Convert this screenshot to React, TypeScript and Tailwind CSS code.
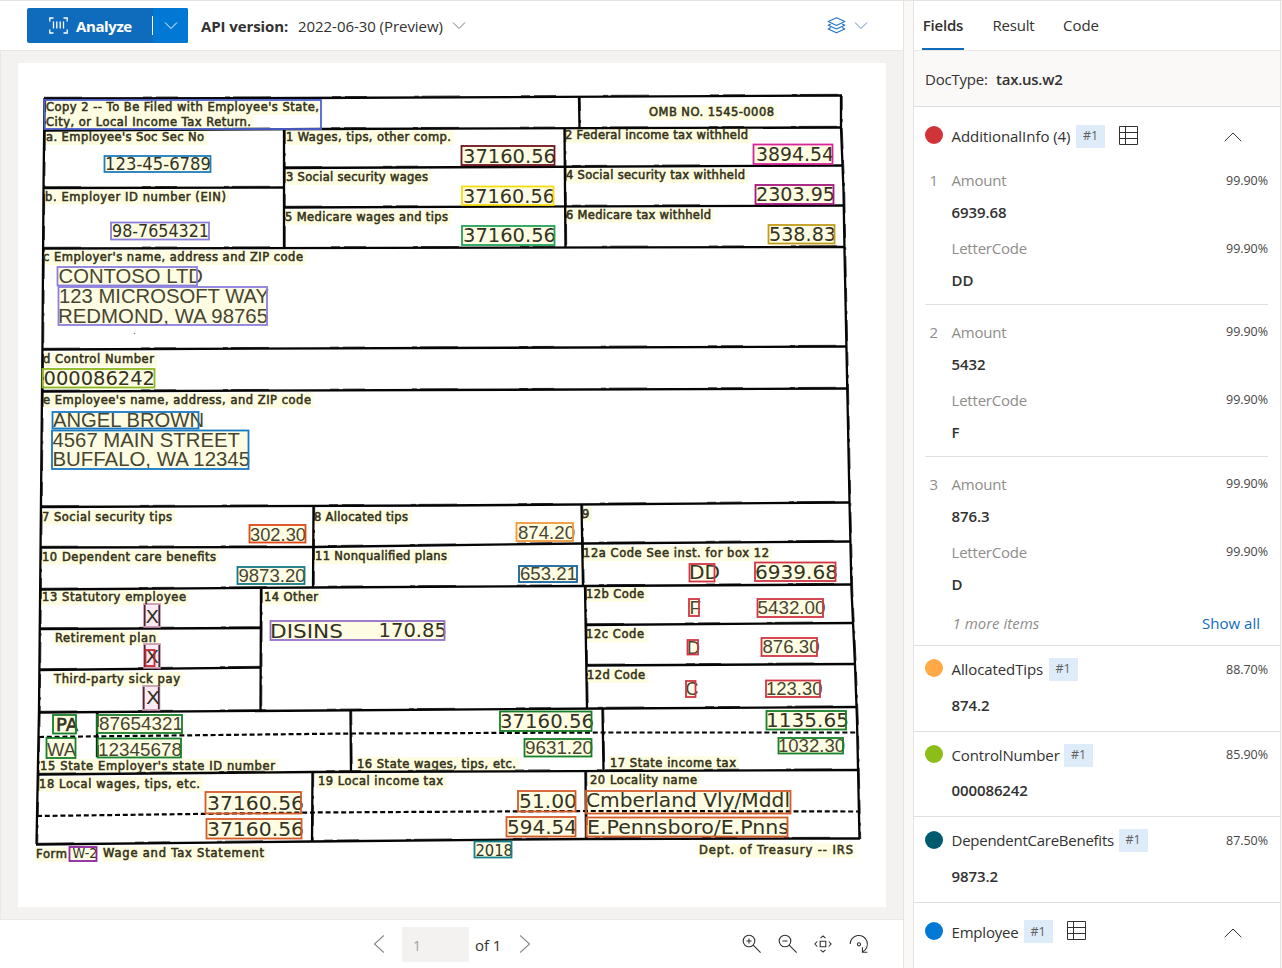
import React from "react";

type Label = [text: string, x1: number, x2: number, baseline: number];
type Field = [text: string, x1: number, x2: number, baseline: number, size: number, face: "v" | "a"];
type Box = [x1: number, y1: number, x2: number, y2: number, color: string];

const labels: Label[] = [
  ["Copy 2 -- To Be Filed with Employee's State,", 46, 319, 111.4],
  ["City, or Local Income Tax Return.", 46, 251, 126],
  ["a. Employee's Soc Sec No", 46, 204, 141.5],
  ["b. Employer ID number (EIN)", 45, 226, 201],
  ["1 Wages, tips, other comp.", 286, 451, 141.5],
  ["3 Social security wages", 286, 428, 181.5],
  ["5 Medicare wages and tips", 285, 448, 221],
  ["OMB NO. 1545-0008", 649, 774, 116.5],
  ["2 Federal income tax withheld", 565, 748, 139.6],
  ["4 Social security tax withheld", 566, 745, 179.6],
  ["6 Medicare tax withheld", 566, 711, 219.2],
  ["c Employer's name, address and ZIP code", 43, 303, 261.5],
  ["d Control Number", 43, 154, 363.5],
  ["e Employee's name, address, and ZIP code", 43, 311, 404.2],
  ["7 Social security tips", 42, 172, 521],
  ["8 Allocated tips", 314, 408, 521],
  ["9", 582, 589, 518],
  ["10 Dependent care benefits", 42, 216, 561],
  ["11 Nonqualified plans", 315, 447, 560.5],
  ["12a Code See inst. for box 12", 583, 769, 557.5],
  ["13 Statutory employee", 42, 186, 601.5],
  ["14 Other", 264, 318, 601],
  ["12b Code", 586, 644, 598.4],
  ["12c Code", 586, 644, 638.7],
  ["12d Code", 587, 645, 679.5],
  ["Retirement plan", 55, 156, 642],
  ["Third-party sick pay", 54, 180, 683],
  ["15 State Employer's state ID number", 40, 275, 770],
  ["16 State wages, tips, etc.", 357, 516, 768],
  ["17 State income tax", 610, 736, 767.3],
  ["18 Local wages, tips, etc.", 39, 200, 788],
  ["19 Local income tax", 318, 443, 785],
  ["20 Locality name", 590, 697, 784.4],
  ["Form", 36, 67, 858.3],
  ["Wage and Tax Statement", 103, 264, 857.5],
  ["Dept. of Treasury -- IRS", 699, 853, 854.4],
];

const fields: Field[] = [
  ["123-45-6789", 105, 211, 170.3, 18, "v"],
  ["98-7654321", 112, 209, 237.8, 18, "v"],
  ["37160.56", 463, 556, 163, 20, "v"],
  ["37160.56", 463, 555, 203, 20, "v"],
  ["37160.56", 463, 556, 242.8, 20, "v"],
  ["3894.54", 756, 834, 161.8, 20, "v"],
  ["2303.95", 756, 835, 201.8, 20, "v"],
  ["538.83", 769, 836, 241.8, 20, "v"],
  ["CONTOSO LTD", 58.5, 203, 283.5, 19.6, "a"],
  ["123 MICROSOFT WAY", 59, 269, 303.3, 19.6, "a"],
  ["REDMOND, WA 98765", 58, 268, 323.2, 19.6, "a"],
  ["000086242", 43.5, 155, 385.5, 20, "v"],
  ["ANGEL BROWN", 53, 204, 427.2, 19.6, "a"],
  ["4567 MAIN STREET", 52.5, 240, 447, 19.6, "a"],
  ["BUFFALO, WA 12345", 52.5, 250, 466.8, 19.6, "a"],
  ["302.30", 250, 306, 541, 19, "a"],
  ["9873.20", 238.5, 305.5, 582.5, 19, "a"],
  ["874.20", 518, 575, 539, 19, "a"],
  ["653.21", 520, 577, 580.3, 19, "a"],
  ["DD", 689, 720, 579.5, 19, "v"],
  ["6939.68", 755, 838, 579.2, 20, "v"],
  ["F", 689.5, 701, 614.8, 18, "a"],
  ["5432.00", 757.5, 825.5, 614.8, 19, "a"],
  ["D", 687, 700, 654, 18, "a"],
  ["876.30", 762.5, 819.5, 653.8, 19, "a"],
  ["C", 685.5, 698.5, 695.2, 18, "a"],
  ["123.30", 766, 822.5, 695.3, 19, "a"],
  ["DISINS", 270, 343, 638, 19.5, "v"],
  ["170.85", 378.5, 447, 637.8, 19.5, "v"],
  ["X", 145.5, 159, 623.5, 17.5, "v"],
  ["X", 145.5, 159, 663.5, 17.5, "v"],
  ["X", 146, 160, 704.5, 17.5, "v"],
  ["PA", 56, 78, 731, 18, "v"],
  ["87654321", 99, 183, 730.5, 19, "a"],
  ["WA", 47, 76, 756.6, 19, "a"],
  ["12345678", 98, 182, 756, 19, "a"],
  ["37160.56", 500, 594, 728, 20, "v"],
  ["9631.20", 525, 593, 754.8, 19, "a"],
  ["1135.65", 766, 849, 727.5, 20, "v"],
  ["1032.30", 778, 845, 752.5, 19, "a"],
  ["37160.56", 207, 304, 810, 20, "v"],
  ["37160.56", 207, 304, 836, 20, "v"],
  ["51.00", 519, 577, 808, 20, "v"],
  ["594.54", 507, 577, 834, 20, "v"],
  ["Cmberland Vly/Mddl", 586, 790, 807.8, 19.5, "v"],
  ["E.Pennsboro/E.Pnns", 587, 789, 834, 19.5, "v"],
  ["W-2", 72.5, 97.5, 858.3, 13.5, "v"],
  ["2018", 475.5, 513, 856, 15.5, "v"],
];

const RED = "#d13545";
const GREEN = "#168028";
const RUST = "#d45a28";

const boxes: Box[] = [
  [44.5, 100, 321, 129, "#4f62d0"],
  [104.5, 156, 210.5, 172, "#1f7dbd"],
  [111, 222.5, 209, 239.5, "#8b7fdd"],
  [461.5, 146, 554.5, 165, "#6e1420"],
  [462, 186.5, 553.5, 205, "#f8dc10"],
  [462, 226, 554.5, 245, "#1fa35a"],
  [753.5, 144.5, 832.5, 164, "#d6249a"],
  [755.5, 185, 833.5, 204, "#a3177f"],
  [768.5, 225, 834.5, 243.5, "#c19c1c"],
  [57.5, 267, 197, 285.5, "#8b7fdd"],
  [58.5, 287, 267, 325, "#8b7fdd"],
  [42.5, 369, 154.5, 387.5, "#8cb820"],
  [52.5, 412, 198.5, 428.5, "#1878c4"],
  [52, 430.5, 248.5, 469, "#1878c4"],
  [249.5, 525, 305.5, 542.5, "#dd4815"],
  [237.5, 567, 304.5, 584, "#147886"],
  [516.5, 523, 573, 541, "#f2983e"],
  [519, 566, 577, 582, "#1464a0"],
  [689.5, 564, 714.5, 581.5, RED],
  [755, 562.5, 835.5, 581, RED],
  [689, 599, 699, 616, RED],
  [757.5, 599, 823, 617, RED],
  [687.5, 640, 698, 654.5, RED],
  [761.5, 638, 817, 656, RED],
  [686, 681, 695.5, 697, RED],
  [766, 680.5, 820, 697, RED],
  [270.5, 621, 444.5, 640, "#9470c8"],
  [145.5, 650, 154.5, 666, "#c02a34"],
  [53, 715, 76, 733.5, GREEN],
  [97, 715, 182, 733, GREEN],
  [46.5, 738, 75.5, 758, GREEN],
  [97.5, 738.5, 181, 757.5, GREEN],
  [500, 711.5, 591.5, 731, GREEN],
  [524.5, 739, 591.5, 756.5, GREEN],
  [766.5, 711, 846, 729.5, GREEN],
  [778.5, 738, 843, 753.5, GREEN],
  [205.5, 792, 301, 813.5, RUST],
  [206.5, 819, 301.5, 838.5, RUST],
  [518, 791, 575.5, 811.5, RUST],
  [506.5, 817, 575.5, 836.5, RUST],
  [586, 791, 790.5, 813.5, RUST],
  [586.5, 817.5, 787.5, 836.5, RUST],
  [69.5, 847, 96.5, 861, "#8d24a0"],
  [474.5, 841.5, 511.5, 857.5, "#148088"],
];

const rules = [
  "M44 98.5 L300 98 L842 95.5",
  "M43 130.5 L320 129 L842 127.5",
  "M43 188 L284 187.5",
  "M284 168 L843 165.5",
  "M284 207.5 L843 205.5",
  "M43 248.5 L844 247",
  "M42 349.5 L846 346.5",
  "M42 391.5 L847 388.5",
  "M41 507 L440 505.5 L849 502.5",
  "M40 547.5 L313 547 L583 543.5 L850 541.5",
  "M40 589.5 L313 587.5 L583 586 L852 584.5",
  "M40 629 L261 628",
  "M39 670 L261 667.5",
  "M586 625 L854 623",
  "M587 665.5 L855 664",
  "M39 712.5 L604 708.5 L857 707",
  "M38 774.5 L312 772 L859 770",
  "M36 844.5 L312 841.5 L586 839 L860 838.5",
  "M44.5 98 L43.5 190 L42.5 340 L41 500 L39 710 L36.5 844",
  "M841 96 L841 128 L843.5 190 L844.5 250 L847.5 400 L849.5 502 L851.5 590 L855 665 L857 720 L859.5 839",
  "M284 130 L284 248",
  "M579 97 L579.5 128",
  "M564.5 128 L565.5 248",
  "M313.5 507 L313 588",
  "M581.5 505 L583 586",
  "M585 586 L587 709",
  "M261 589 L260.5 711",
  "M97 713 L97 757",
  "M350.5 711 L351 771",
  "M602.5 709 L603.5 770",
  "M312.5 773 L312 842",
  "M585.5 772 L586 839",
];

const marks: [number, number, number, number][] = [
  [144, 604, 160, 627],
  [144, 644, 160, 668],
  [143, 686, 159.5, 710],
];

function ScannedForm() {
  return (
    <svg className="block h-[844px] w-[868px] bg-white" viewBox="18 63 868 844">
      {labels.map(([t, x1, x2, y]) => (
        <rect key={t} x={x1 - 1} y={y - 11} width={x2 - x1 + 4} height={14.5} fill="#fefde2" />
      ))}
      {boxes.map(([x1, y1, x2, y2], i) => (
        <rect key={i} x={x1} y={y1} width={x2 - x1} height={y2 - y1} fill={i === 0 ? "none" : "#fefde4"} />
      ))}
      <g fill="none" stroke="#050505">
        {rules.map((d) => (
          <path key={d} d={d} strokeWidth="2.3" />
        ))}
        {rules.slice(0, 18).map((d) => (
          <path key={d} d={d} strokeWidth="0.8" strokeDasharray="38 61 9 4 22 47 5 3" transform="translate(0 -1.2)" />
        ))}
        {rules.slice(18).map((d) => (
          <path key={d} d={d} strokeWidth="0.8" strokeDasharray="14 9 3 6 21 11" transform="translate(1.2 0)" />
        ))}
        <path d="M39 737 L351 733.5 L603 732.5 L857 732.5" strokeWidth="2.2" strokeDasharray="5 2.8" />
        <path d="M37 816 L312 812.5 L586 811 L859 811.5" strokeWidth="2.2" strokeDasharray="5 2.8" />
      </g>
      <circle cx="134.5" cy="333.5" r="0.8" fill="#888" />
      {marks.map(([x1, y1, x2, y2]) => (
        <g key={y1}>
          <rect x={x1} y={y1} width={x2 - x1} height={y2 - y1} fill="#fbeaf3" stroke="#c390a8" strokeWidth="1.6" />
          <path d={`M${x1 + 0.8} ${y1 + 1}V${y2 - 1}M${x2 - 0.8} ${y1 + 1}V${y2 - 1}`} stroke="#4a2838" strokeWidth="1.6" />
        </g>
      ))}
      <g className="font-['DejaVu_Sans']" fontSize="11.5" fill="#35331a" stroke="#35331a" strokeWidth="0.55">
        {labels.map(([t, x1, x2, y]) => (
          <text key={t} x={x1} y={y - 0.5} textLength={x2 - x1} lengthAdjust="spacing">
            {t}
          </text>
        ))}
      </g>
      {fields.map(([t, x1, x2, y, size, face], i) => (
        <text
          key={i}
          x={x1}
          y={y - 0.4}
          fontSize={size}
          textLength={x2 - x1}
          lengthAdjust="spacingAndGlyphs"
          fill={face === "v" ? "#33331f" : "#47452f"}
          stroke={t === "PA" ? "#33331f" : "none"}
          strokeWidth="0.6"
          className={face === "v" ? "font-['DejaVu_Sans']" : "font-['Liberation_Sans']"}
        >
          {t}
        </text>
      ))}
      {boxes.map(([x1, y1, x2, y2, c], i) => (
        <rect key={i} x={x1} y={y1} width={x2 - x1} height={y2 - y1} fill="none" stroke={c} strokeWidth="1.8" />
      ))}
    </svg>
  );
}

function Chevron({ className }: { className: string }) {
  return (
    <svg className={className} viewBox="0 0 14 9" fill="none" stroke="currentColor" strokeWidth="1">
      <path d="M1 1.5 7 7.5 13 1.5" />
    </svg>
  );
}

function TableIcon() {
  return (
    <svg className="ml-[14px] size-[19px] shrink-0 -translate-y-px text-[#323130]" viewBox="0 0 19 19" fill="none" stroke="currentColor">
      <path d="M.5.5h18v18H.5zM.5 6.5h18M.5 12.5h18M6.5.5v18" />
    </svg>
  );
}

function Tag() {
  return (
    <span className="ml-[5px] flex h-[23px] w-[29px] shrink-0 items-center justify-center bg-[#deecf9] text-[12.5px] text-[#605e5c]">#1</span>
  );
}

function Collapse() {
  return (
    <svg className="mr-[38px] ml-auto h-[10px] w-[18px] translate-y-px text-[#323130]" viewBox="0 0 18 10" fill="none" stroke="currentColor">
      <path d="M.7 9.2 9 1l8.3 8.2" />
    </svg>
  );
}

function FieldHead({ color, name, nameClass, children }: { color: string; name: string; nameClass: string; children?: React.ReactNode }) {
  return (
    <div className="flex h-[34px] items-center">
      <span className={`ml-[11px] size-[18px] shrink-0 -translate-y-px rounded-full ${color}`} />
      <span className={`ml-[8.5px] shrink-0 whitespace-nowrap ${nameClass}`}>{name}</span>
      <Tag />
      {children}
    </div>
  );
}

function Confidence({ value }: { value: string }) {
  return <span className="ml-auto pt-px text-[12.5px] tracking-[-0.05px] text-[#484644]">{value}</span>;
}

function Item({ index, amount, code, last }: { index: number; amount: string; code: string; last?: boolean }) {
  return (
    <div className={`mr-[12px] ml-[11px] h-[151.8px] border-b pt-[11.4px] ${last ? "border-transparent" : "border-[#e1dfdd]"}`}>
      <div className="flex h-8 items-center text-[#8f8d8b]">
        <span className="w-[26.5px] pl-[4.5px]">{index}</span>
        <span className="tracking-[-0.2px]">Amount</span>
        <Confidence value="99.90%" />
      </div>
      <div className="flex h-8 items-center pl-[26.5px] font-semibold tracking-[-0.1px]">{amount}</div>
      <div className="mt-1 flex h-8 items-center pl-[26.5px] text-[#8f8d8b]">
        <span className="tracking-[-0.2px]">LetterCode</span>
        <Confidence value="99.90%" />
      </div>
      <div className="flex h-8 items-center pl-[26.5px] font-semibold tracking-[-0.1px]">{code}</div>
    </div>
  );
}

function SimpleField({ color, name, nameClass, confidence, value }: { color: string; name: string; nameClass: string; confidence: string; value: string }) {
  return (
    <div className="h-[85.67px] border-b border-[#e1dfdd] pt-[6.4px] pr-[12px]">
      <FieldHead color={color} name={name} nameClass={nameClass}>
        <Confidence value={confidence} />
      </FieldHead>
      <div className="mt-[2.4px] flex h-8 items-center pl-[37.5px] font-semibold tracking-[-0.1px]">{value}</div>
    </div>
  );
}

export default function App() {
  return (
    <div className="flex h-[968px] w-[1282px] overflow-hidden border-t border-[#e5e4e3] bg-[#faf9f8] font-['Open_Sans',sans-serif] text-[15px] text-[#323130]">
      <main className="flex w-[904px] shrink-0 flex-col border-r border-[#e5e4e3] bg-white">
        <header className="flex h-[50px] shrink-0 items-center border-b border-[#e9e8e7]">
          <button className="ml-[27px] flex h-[35px] w-[161px] items-center rounded-[2px] bg-[#0f6cbd] text-white">
            <span className="flex h-full w-[125px] items-center">
              <svg className="ml-[22px] h-[17px] w-[19px]" viewBox="0 0 19 17" fill="none" stroke="currentColor" strokeWidth="1.3">
                <path d="M4.5 1H.8v3.5M14.5 1h3.7v3.5M4.5 16H.8v-3.5M14.5 16h3.7v-3.5M4.5 4.5v7M7.8 4.5v7M11.2 4.5v7M14.5 4.5v7" />
              </svg>
              <span className="ml-[8px] pt-px text-[15px] font-bold tracking-[-0.4px]">Analyze</span>
            </span>
            <span className="h-[19px] w-px bg-white" />
            <span className="flex h-full flex-1 items-center justify-center rounded-r-[2px] bg-[#0078d4]">
              <Chevron className="h-[9px] w-[14px]" />
            </span>
          </button>
          <span className="ml-[13px] w-[97px] pt-px font-bold tracking-[-0.1px] whitespace-nowrap">API version:</span>
          <span className="w-[145px] pt-px tracking-[-0.05px] whitespace-nowrap">2022-06-30 (Preview)</span>
          <Chevron className="ml-[9px] h-[9px] w-[14px] text-[#7a7876]" />
          <svg className="ml-auto h-[17px] w-[19px] text-[#2474c8]" viewBox="0 0 19 17" fill="none" stroke="currentColor" strokeWidth="1.1" strokeLinejoin="round">
            <path d="M9.5 .8 17.8 4.6 9.5 8.4 1.2 4.6zM3.8 6.9 1.2 8.2l8.3 3.9 8.3-3.9-2.6-1.3M3.8 10.6 1.2 11.9l8.3 3.9 8.3-3.9-2.6-1.3" />
          </svg>
          <Chevron className="mr-[35px] ml-[8px] h-[9px] w-[14px] text-[#5b8fc8]" />
        </header>
        <section className="h-[869px] shrink-0 border-b border-l border-[#e9e8e7] bg-[#f3f2f1] pt-[12px] pl-[17px]">
          <ScannedForm />
        </section>
        <footer className="flex flex-1 items-center">
          <svg className="ml-[373px] h-[20px] w-[12px] text-[#8a8886]" viewBox="0 0 12 20" fill="none" stroke="currentColor" strokeWidth="1.1">
            <path d="M10.8 1.5 1.5 10l9.3 8.5" />
          </svg>
          <span className="ml-[17px] flex h-[35px] w-[67px] items-center bg-[#f3f2f1] pt-[2px] pl-[11px] text-[14px] text-[#a19f9d]">1</span>
          <span className="ml-[6px] w-[26px] pt-[2px] tracking-[-0.1px] whitespace-nowrap">of 1</span>
          <svg className="ml-[18px] h-[20px] w-[12px] text-[#8a8886]" viewBox="0 0 12 20" fill="none" stroke="currentColor" strokeWidth="1.1">
            <path d="M1.2 1.5l9.3 8.5-9.3 8.5" />
          </svg>
          <svg className="ml-auto size-[20px]" viewBox="0 0 20 20" fill="none" stroke="currentColor" strokeWidth="1.1">
            <circle cx="7" cy="7" r="5.8" />
            <path d="M11.2 11.2 18.6 18.6M4.4 7h5.2M7 4.4v5.2" />
          </svg>
          <svg className="ml-[15.5px] size-[20px]" viewBox="0 0 20 20" fill="none" stroke="currentColor" strokeWidth="1.1">
            <circle cx="7" cy="7" r="5.8" />
            <path d="M11.2 11.2 18.6 18.6M4.4 7h5.2" />
          </svg>
          <svg className="ml-[15.5px] size-[20px]" viewBox="0 0 20 20" fill="none" stroke="currentColor" strokeWidth="1.1">
            <path d="M7.2 7.2h5.6v5.6H7.2zM7.5 4.2 10 1.9l2.5 2.3M7.5 15.8l2.5 2.3 2.5-2.3M4.2 7.5 1.9 10l2.3 2.5M15.8 7.5l2.3 2.5-2.3 2.5" />
          </svg>
          <svg className="mr-[34px] ml-[16px] size-[20px]" viewBox="0 0 20 20" fill="none" stroke="currentColor" strokeWidth="1.1">
            <path d="M1.2 10A8.6 8.6 0 1 1 13.6 17.8M13.4 13.2v5h5" />
            <circle cx="10" cy="10.3" r="1.6" />
          </svg>
        </footer>
      </main>

      <aside className="ml-[9px] flex w-[368px] shrink-0 flex-col border-x border-[#e5e4e3] bg-white">
        <nav className="flex h-[50px] shrink-0 items-stretch border-b border-[#e9e8e7]">
          <span className="ml-[8px] flex w-[42px] items-center justify-center border-b-2 border-[#0f6cbd] pt-[2px] font-semibold tracking-[-0.2px]">Fields</span>
          <span className="ml-[29px] flex w-[41px] items-center justify-center tracking-[-0.2px]">Result</span>
          <span className="ml-[29px] flex w-[36px] items-center justify-center">Code</span>
        </nav>
        <div className="flex h-[56px] shrink-0 items-center border-b border-[#e1dfdd] bg-[#faf9f8] pt-px pl-[11px]">
          <span className="w-[71px] tracking-[-0.2px]">DocType:</span>
          <span className="font-semibold tracking-[-0.25px]">tax.us.w2</span>
        </div>
        <div className="h-[539px] shrink-0 border-b border-[#e1dfdd] pt-[12px]">
          <FieldHead color="bg-[#d13438]" name="AdditionalInfo (4)" nameClass="w-[119.5px] tracking-[-0.05px]">
            <TableIcon />
            <Collapse />
          </FieldHead>
          <Item index={1} amount="6939.68" code="DD" />
          <Item index={2} amount="5432" code="F" />
          <Item index={3} amount="876.3" code="D" last />
          <div className="flex h-[29px] items-center pl-[38.5px]">
            <span className="text-[#8f8d8b] italic">1 more items</span>
            <span className="mr-[20px] ml-auto text-[#0f6cbd]">Show all</span>
          </div>
        </div>
        <SimpleField color="bg-[#ffaa44]" name="AllocatedTips" nameClass="w-[92px] tracking-[-0.1px]" confidence="88.70%" value="874.2" />
        <SimpleField color="bg-[#8cbd18]" name="ControlNumber" nameClass="w-[107.5px] tracking-[-0.15px]" confidence="85.90%" value="000086242" />
        <SimpleField color="bg-[#005b70]" name="DependentCareBenefits" nameClass="w-[162px] tracking-[-0.25px]" confidence="87.50%" value="9873.2" />
        <div className="pt-[12px]">
          <FieldHead color="bg-[#0078d4]" name="Employee" nameClass="w-[67px] tracking-[-0.2px]">
            <TableIcon />
            <Collapse />
          </FieldHead>
        </div>
      </aside>
    </div>
  );
}
